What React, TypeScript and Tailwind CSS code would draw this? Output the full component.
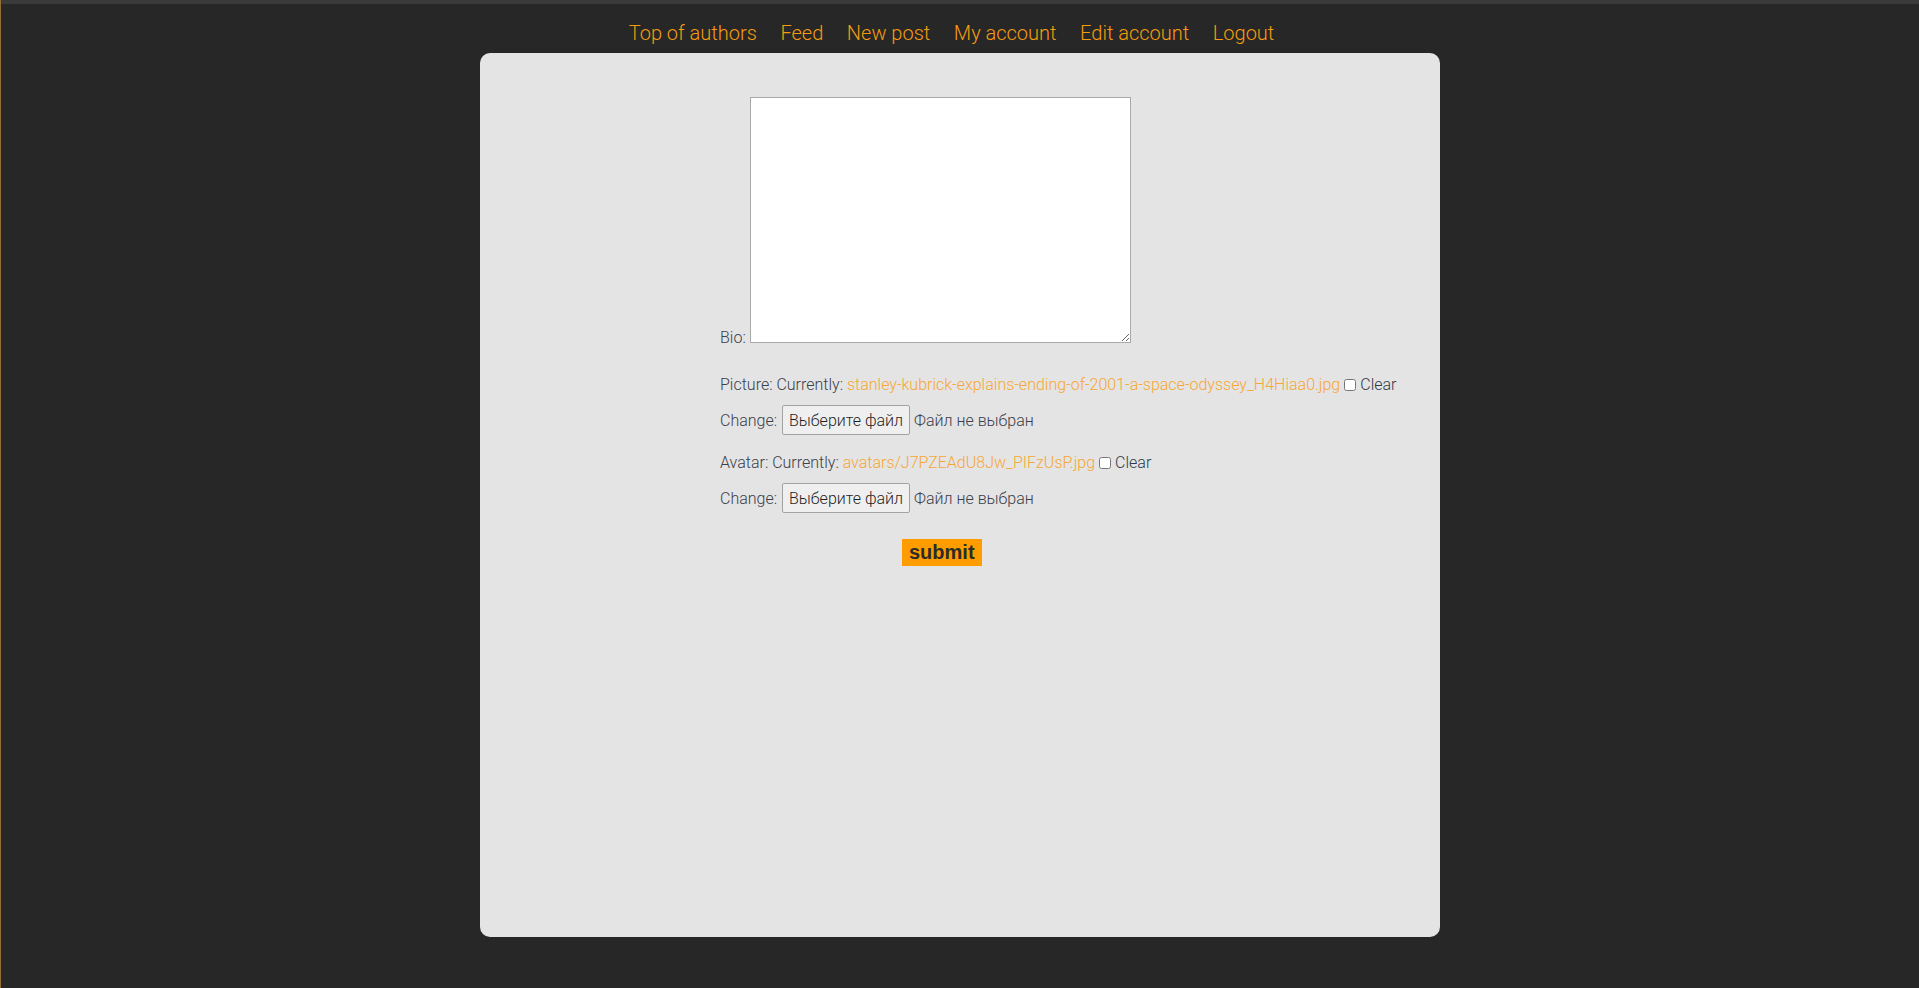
const navLinks = ["Top of authors", "Feed", "New post", "My account", "Edit account", "Logout"];

type FileFieldProps = {
  label: string,
  current: string
}

function FileField({ label, current }: FileFieldProps) {
  return (
    <div className="flex flex-col">
      {/* Current file */}
      <div className="flex items-center h-[19px] whitespace-nowrap">
        <span>{label}: Currently:&nbsp;</span>
        <a href="#" className="text-[#f6a733]">{current}</a>
        <input type="checkbox" className="ml-[4px] mr-[4px] w-[12px] h-[12px]" />
        <span className="text-[#2e3a4a]">Clear</span>
      </div>

      {/* Change */}
      <div className="flex items-center h-[30px] mt-[11px] whitespace-nowrap">
        <span>Change:&nbsp;</span>
        <button
          type="button"
          className="h-[30px] px-[6px] ml-[1px] border border-[#a3a3a3] rounded-[2px] bg-[#efefef] text-[#1f1f1f] font-light"
        >
          Выберите файл
        </button>
        <span className="ml-[4px]">Файл не выбран</span>
      </div>
    </div>
  );
}

export default function App() {
  return (
    <div className="min-h-[988px] bg-[#272727] border-l border-[#8f6f32] font-['Roboto',sans-serif] font-light">
      {/* Top strip */}
      <div className="h-[4px] bg-[#3a3a3a]" />

      {/* Nav */}
      <nav className="flex justify-center gap-[23.6px] pt-[17px] pb-[8px] pr-[17px] text-[20px] leading-[24px] text-[#f59c10]">
        {navLinks.map((link) => (
          <a key={link} href="#">{link}</a>
        ))}
      </nav>

      {/* Panel */}
      <div className="w-[960px] h-[884px] mx-auto bg-[#e4e4e4] rounded-[10px] pt-[44px]">
        <form className="w-[480px] mx-auto text-[16px] leading-[19px] text-[#3b4049]">
          {/* Bio */}
          <div className="whitespace-nowrap">
            <label htmlFor="bio">Bio:</label>{" "}
            <textarea
              id="bio"
              className="inline-block align-baseline w-[381px] h-[246px] border border-[#a9a9a9] bg-white"
            />
          </div>

          <div className="flex flex-col gap-[18px] mt-[28px]">
            <FileField
              label="Picture"
              current="stanley-kubrick-explains-ending-of-2001-a-space-odyssey_H4Hiaa0.jpg"
            />
            <FileField label="Avatar" current="avatars/J7PZEAdU8Jw_PIFzUsP.jpg" />
          </div>

          {/* Submit */}
          <div className="mt-[26px] pl-[182px]">
            <button
              type="submit"
              className="h-[27px] px-[7px] bg-[#ff9c00] text-[#2b2b2b] font-bold text-[20px] leading-[27px] font-['Liberation_Sans',Arial,sans-serif]"
            >
              submit
            </button>
          </div>
        </form>
      </div>
    </div>
  );
}
